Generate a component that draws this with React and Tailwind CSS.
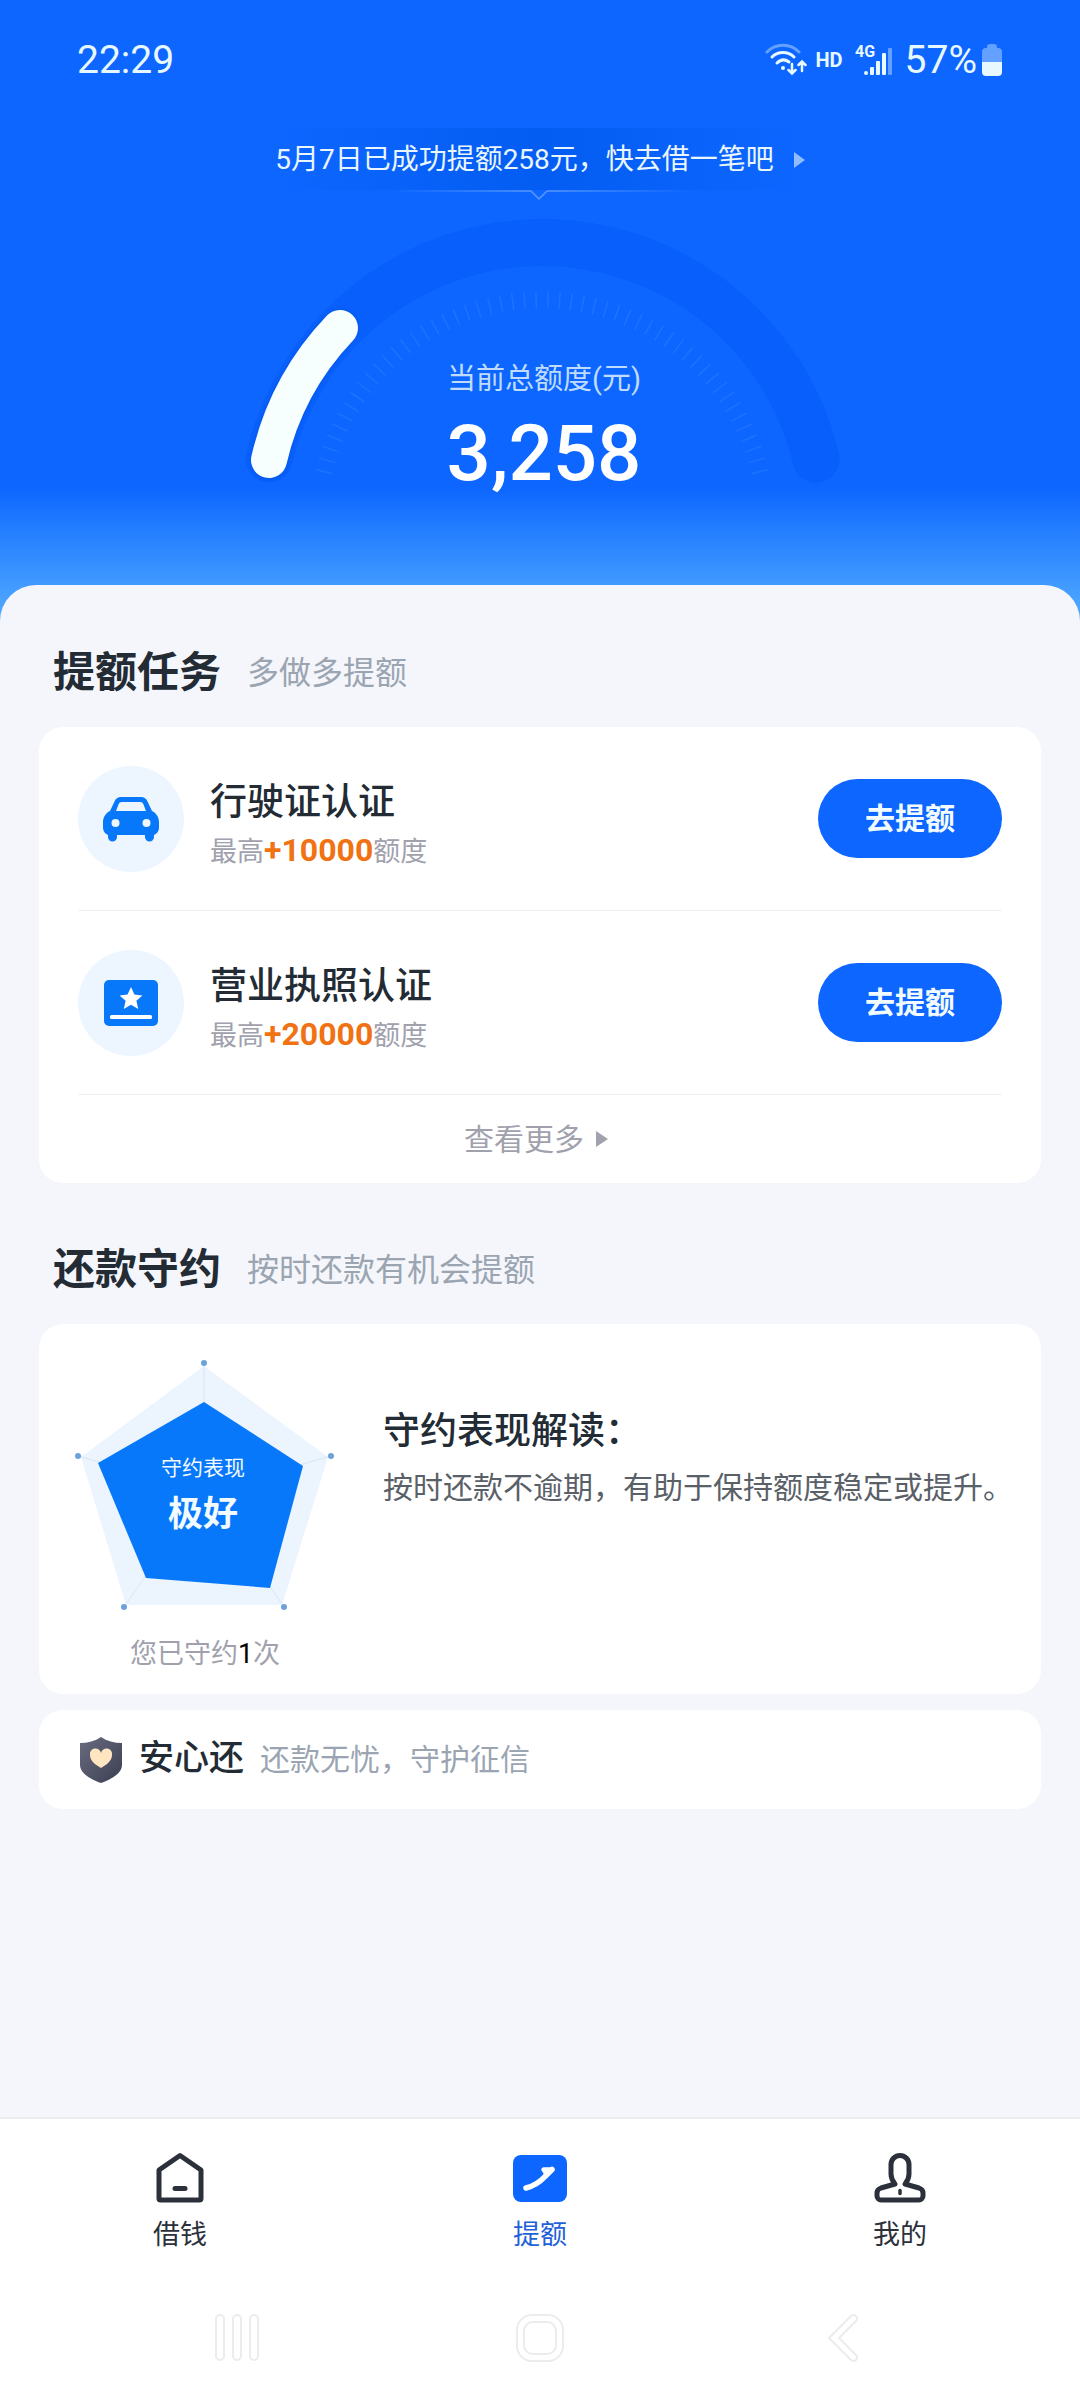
import React, { useState } from 'react';

const tasks = [
  { id: 'license', title: '行驶证认证', amount: '+10000', icon: CarIcon },
  { id: 'business', title: '营业执照认证', amount: '+20000', icon: CertIcon },
];

const tabs = [
  { id: 'borrow', label: '借钱', icon: HouseIcon },
  { id: 'raise', label: '提额', icon: RaiseIcon },
  { id: 'mine', label: '我的', icon: UserIcon },
];

const ticks = Array.from({ length: 52 }, (_, i) => 13.5 + i * 3);

export default function App() {
  const [activeTab, setActiveTab] = useState('raise');

  return (
    <div className="flex min-h-screen flex-col bg-[#f4f6fb] font-[Roboto,'Noto_Sans_CJK_SC',sans-serif] text-[#232b35]">
      <header className="bg-linear-to-b from-[#0d66ff] from-78% to-[#55adff] pb-10 text-white">
        <StatusBar />
        <NoticeBar />
        <Gauge />
      </header>

      <main className="-mt-10 flex-1 rounded-t-[36px] bg-[#f4f6fb] px-[39px] pt-14 pb-10">
        <SectionTitle title="提额任务" hint="多做多提额" />
        <section className="mt-[22px] rounded-3xl bg-white px-[39px]">
          {tasks.map(task => (
            <TaskRow key={task.id} task={task} />
          ))}
          <button className="flex h-[88px] w-full items-center justify-center gap-3 pr-2 text-[30px] text-[#a0a1ad]">
            查看更多
            <svg viewBox="0 0 12 16" className="h-4 w-3" fill="currentColor">
              <path d="M0 0l12 8-12 8z" />
            </svg>
          </button>
        </section>

        <div className="pt-[55px]">
          <SectionTitle title="还款守约" hint="按时还款有机会提额" />
        </div>
        <section className="mt-[22px] flex h-[370px] gap-10 rounded-3xl bg-white pt-7 pl-7">
          <div className="flex w-[276px] shrink-0 flex-col items-center">
            <Radar />
            <p className="mt-[22px] text-[27px] leading-10 text-[#a0a1ad]">
              您已守约<span className="text-black">1</span>次
            </p>
          </div>
          <div className="pt-[54px]">
            <h3 className="text-[37px] leading-[52px] font-medium">守约表现解读：</h3>
            <p className="mt-1 text-[30px] leading-[52px] whitespace-nowrap text-[#5a6068]">
              按时还款不逾期，有助于保持额度稳定或提升。
            </p>
          </div>
        </section>

        <a href="#safe" className="mt-4 flex h-[99px] items-center rounded-3xl bg-white px-10">
          <ShieldIcon />
          <span className="ml-4 text-[35px] font-medium">安心还</span>
          <span className="ml-4 text-[30px] text-[#9aa5b1]">还款无忧，守护征信</span>
        </a>
      </main>

      <nav className="grid grid-cols-3 border-t-2 border-[#ececee] bg-white pt-8">
        {tabs.map(({ id, label, icon: Icon }) => (
          <button
            key={id}
            onClick={() => setActiveTab(id)}
            className={`flex flex-col items-center gap-3 text-[27px] leading-10 ${activeTab === id ? 'text-[#1f61d8]' : 'text-[#2b303a]'}`}
          >
            <Icon />
            {label}
          </button>
        ))}
      </nav>
      <SystemNav />
    </div>
  );
}

function StatusBar() {
  return (
    <div className="flex h-[120px] items-center justify-between px-[77px] text-[39px] text-[#e8f8ff]">
      <span>22:29</span>
      <div className="flex items-center">
        <svg viewBox="0 0 42 34" className="h-[34px] w-[42px]" fill="none" stroke="currentColor" strokeWidth="3" strokeLinecap="round">
          <path d="M2 9c9-9 23-9 32 0" opacity="0.4" />
          <path d="M7 14c6-6 16-6 22 0M12 20c4-4 8-4 12-1" />
          <circle cx="18" cy="25" r="2" fill="currentColor" stroke="none" />
          <path d="M27 21v9M23.5 27l3.5 3.5 3.5-3.5M37 28v-9M33.5 22l3.5-3.5 3.5 3.5" strokeWidth="2.5" />
        </svg>
        <span className="ml-2 text-[20px] font-bold">HD</span>
        <svg viewBox="0 0 38 34" className="ml-3 h-[34px] w-[38px]" fill="currentColor">
          <text x="0" y="14" fontSize="16" fontWeight="700">4G</text>
          <rect x="9" y="28" width="4" height="4" rx="2" />
          <rect x="15" y="24" width="4" height="8" rx="1" />
          <rect x="21" y="18" width="4" height="14" rx="1" />
          <rect x="27" y="10" width="4" height="22" rx="1" />
          <rect x="33" y="5" width="4" height="27" rx="1" opacity="0.4" />
        </svg>
        <span className="ml-3">57%</span>
        <svg viewBox="0 0 22 34" className="ml-1 h-[34px] w-[22px]" fill="currentColor">
          <path d="M6 4a3 3 0 0 1 3-3h4a3 3 0 0 1 3 3v1h1a4 4 0 0 1 4 4v10H1V9a4 4 0 0 1 4-4h1z" opacity="0.4" />
          <path d="M1 19h20v10a4 4 0 0 1-4 4H5a4 4 0 0 1-4-4z" />
        </svg>
      </div>
    </div>
  );
}

function NoticeBar() {
  return (
    <div className="flex flex-col items-center pt-2">
      <button className="flex h-[62px] items-center gap-5 bg-linear-to-r from-transparent via-[#045df2] to-transparent px-1 pt-0.5 text-[28px] text-[#eaf6ff]">
        5月7日已成功提额258元，快去借一笔吧
        <svg viewBox="0 0 11 16" className="h-4 w-[11px]" fill="#8fbcff">
          <path d="M0 0l11 8-11 8z" />
        </svg>
      </button>
      <svg viewBox="0 0 300 12" className="h-3 w-[300px]" fill="none">
        <defs>
          <linearGradient id="noticeLine" gradientUnits="userSpaceOnUse" x1="0" x2="300" y1="0" y2="0">
            <stop offset="0" stopColor="#5a9bff" stopOpacity="0" />
            <stop offset="0.5" stopColor="#5a9bff" />
            <stop offset="1" stopColor="#5a9bff" stopOpacity="0" />
          </linearGradient>
        </defs>
        <path d="M0 1h141l8 8 8-8h143" stroke="url(#noticeLine)" strokeWidth="1.5" />
      </svg>
    </div>
  );
}

function Gauge() {
  return (
    <div className="relative mx-auto h-[383px] w-[620px]">
      <svg viewBox="0 0 620 383" className="h-full w-full" fill="none" strokeLinecap="round">
        <path d="M39 257A281 281 0 0 1 586 257" stroke="#085ffb" strokeWidth="47" />
        <g stroke="#2b7bff" strokeWidth="1.5" opacity="0.6">
          {ticks.map(deg => (
            <line key={deg} x1="80" y1="322" x2="96" y2="322" transform={`rotate(${deg} 312 322)`} />
          ))}
        </g>
        <path d="M39 259A282 282 0 0 1 110 126" stroke="#0757e6" strokeWidth="40" opacity="0.4" />
        <path d="M39 258A282 282 0 0 1 110 126" stroke="#f6fffd" strokeWidth="36" />
      </svg>
      <div className="absolute inset-x-0 top-[154px] flex flex-col items-center pl-2">
        <span className="text-[29px] leading-[46px] text-[#bfdcff]">当前总额度(元)</span>
        <strong className="text-[78px] leading-[104px] font-medium">3,258</strong>
      </div>
    </div>
  );
}

function SectionTitle({ title, hint }) {
  return (
    <div className="flex items-center gap-[26px] px-[14px]">
      <h2 className="text-[42px] leading-[64px] font-bold">{title}</h2>
      <span className="text-[32px] text-[#9aa5b1]">{hint}</span>
    </div>
  );
}

function TaskRow({ task }) {
  const Icon = task.icon;
  return (
    <div className="flex h-[184px] items-center border-b border-[#f1f1f4]">
      <span className="flex size-[106px] items-center justify-center rounded-full bg-[#edf6ff]">
        <Icon />
      </span>
      <div className="ml-[26px] flex-1 pt-4">
        <h3 className="text-[37px] leading-[48px] font-medium">{task.title}</h3>
        <p className="text-[27px] leading-[46px] text-[#a0a1ad]">
          最高<b className="text-[32px] font-bold text-[#f07213]">{task.amount}</b>额度
        </p>
      </div>
      <button className="h-[79px] w-[184px] rounded-full bg-[#0d66ff] text-[30px] font-bold text-[#f2fbff]">去提额</button>
    </div>
  );
}

function Radar() {
  return (
    <div className="relative h-[260px] w-[276px]">
      <svg viewBox="0 0 276 260" className="h-full w-full">
        <path d="M137 14L261 105 215 253H59L14 105z" fill="#ecf4fe" />
        <path d="M137 11V140M264 104L137 140M217 255L137 140M57 255L137 140M11 104L137 140" stroke="#d6e6f7" strokeWidth="1" />
        <path d="M137 50L236 114 203 236 79 226 31 111z" fill="#0878fb" />
        <g fill="#6ba3d8">
          <circle cx="137" cy="11" r="3" />
          <circle cx="264" cy="104" r="3" />
          <circle cx="217" cy="255" r="3" />
          <circle cx="57" cy="255" r="3" />
          <circle cx="11" cy="104" r="3" />
        </g>
      </svg>
      <div className="absolute inset-x-0 top-[100px] flex flex-col items-center pr-1 text-[#f2fbff]">
        <span className="text-[21px] leading-8">守约表现</span>
        <span className="mt-2 text-[35px] leading-[46px] font-bold">极好</span>
      </div>
    </div>
  );
}

function CarIcon() {
  return (
    <svg viewBox="0 0 56 46" className="h-[46px] w-14">
      <path
        d="M18 1h20a7 7 0 0 1 6.5 4.5L49 15c4 2 7 6 7 11v6a8 8 0 0 1-5 7v2a4.5 4.5 0 0 1-9 0v-2H14v2a4.5 4.5 0 0 1-9 0v-2a8 8 0 0 1-5-7v-6c0-5 3-9 7-11l4.5-9.5A7 7 0 0 1 18 1z"
        fill="#0878fb"
      />
      <path d="M18.5 6h19a3 3 0 0 1 2.8 2L43 15H13l2.7-7a3 3 0 0 1 2.8-2z" fill="#edf6ff" />
      <circle cx="12.5" cy="27" r="4" fill="#edf6ff" />
      <circle cx="43.5" cy="27" r="4" fill="#edf6ff" />
    </svg>
  );
}

function CertIcon() {
  return (
    <svg viewBox="0 0 54 46" className="h-[46px] w-[54px]">
      <rect x="0" y="0" width="54" height="46" rx="5" fill="#0878fb" />
      <path d="M27 7l3.4 7.6 8 .8-6 5.4 1.8 8.2-7.2-4.2-7.2 4.2 1.8-8.2-6-5.4 8-.8z" fill="#fff" />
      <rect x="6" y="35" width="42" height="4" rx="1.5" fill="#fff" />
    </svg>
  );
}

function ShieldIcon() {
  return (
    <svg viewBox="0 0 44 46" className="h-[46px] w-11">
      <defs>
        <linearGradient id="shield" x1="0" y1="0" x2="1" y2="1">
          <stop offset="0" stopColor="#6a6c80" />
          <stop offset="1" stopColor="#3b3f52" />
        </linearGradient>
      </defs>
      <path d="M22 0c6 4 13 6 21 6v22c0 8-10 14-21 18C11 42 1 36 1 28V6c8 0 15-2 21-6z" fill="url(#shield)" />
      <path d="M22 31c-5-3-11-7-11-13a5.5 5.5 0 0 1 11-2 5.5 5.5 0 0 1 11 2c0 6-6 10-11 13z" fill="#ffe6c0" />
    </svg>
  );
}

function HouseIcon() {
  return (
    <svg viewBox="0 0 54 52" className="h-[52px] w-[54px]" fill="none" stroke="currentColor" strokeWidth="5" strokeLinejoin="round" strokeLinecap="round">
      <path d="M27 4.5L48 19v28.500a1.5 1.5 0 0 1-1.5 1.5h-39A1.5 1.5 0 0 1 6 47.500V19z" />
      <path d="M22 37.500h10" />
    </svg>
  );
}

function RaiseIcon() {
  return (
    <svg viewBox="0 0 54 52" className="h-[52px] w-[54px]" fill="none">
      <rect x="0" y="4" width="54" height="47" rx="8" fill="#0d66ff" />
      <path d="M13 37c8-2 14-6 19-11.5l7-7" stroke="#fff" strokeWidth="5.5" strokeLinecap="round" />
      <path d="M30.5 18.5h8.5l-5 5z" fill="#fff" stroke="#fff" strokeWidth="4.5" strokeLinejoin="round" />
    </svg>
  );
}

function UserIcon() {
  return (
    <svg viewBox="0 0 54 52" className="h-[52px] w-[54px]" fill="none" stroke="currentColor" strokeWidth="5" strokeLinejoin="round" strokeLinecap="round">
      <path d="M22 33c-2.5-3-4-6-4-10V13.5a9 9 0 0 1 18 0V23c0 4-1.5 7-4 10l14 4c3 1 4 2.500 4 5V45a4 4 0 0 1-4 4H8a4 4 0 0 1-4-4v-3c0-2.500 1-4 4-5z" />
      <path d="M27 39.5v3" strokeWidth="3.5" />
    </svg>
  );
}

// Android three-button navigation
function SystemNav() {
  return (
    <div className="grid h-[145px] grid-cols-3 items-center justify-items-center bg-white px-[86px] pt-5">
      <button aria-label="最近任务">
        <svg viewBox="0 0 44 48" className="h-12 w-11" fill="none" stroke="#ececec" strokeWidth="2">
          <rect x="1" y="1" width="8" height="45" rx="4" />
          <rect x="18" y="1" width="8" height="45" rx="4" />
          <rect x="35" y="1" width="8" height="45" rx="4" />
        </svg>
      </button>
      <button aria-label="主屏幕">
        <svg viewBox="0 0 48 48" className="size-12" fill="none" stroke="#ececec" strokeWidth="2">
          <rect x="1" y="1" width="46" height="46" rx="15" />
          <rect x="8" y="8" width="32" height="32" rx="9" />
        </svg>
      </button>
      <button aria-label="返回">
        <svg viewBox="0 0 32 50" className="h-[50px] w-8" fill="none" stroke="#ececec" strokeWidth="2" strokeLinejoin="round">
          <path d="M2 25L24 3a3.5 3.5 0 0 1 5 5L12 25l17 17a3.5 3.5 0 0 1-5 5z" />
        </svg>
      </button>
    </div>
  );
}
